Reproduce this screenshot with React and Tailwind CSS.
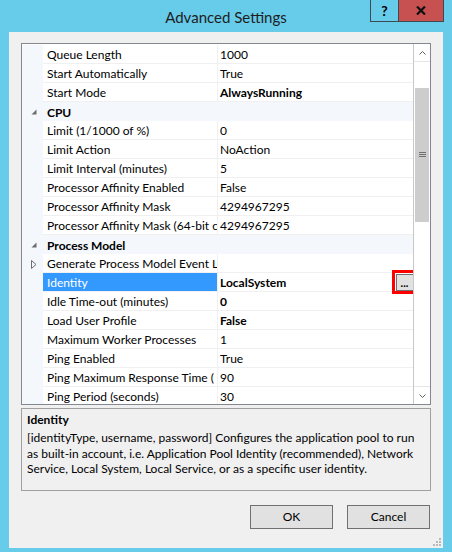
import React from 'react';

const rows = [
  { name: 'Queue Length', value: '1000' },
  { name: 'Start Automatically', value: 'True' },
  { name: 'Start Mode', value: 'AlwaysRunning', bold: true },
  { name: 'CPU', category: true },
  { name: 'Limit (1/1000 of %)', value: '0' },
  { name: 'Limit Action', value: 'NoAction' },
  { name: 'Limit Interval (minutes)', value: '5' },
  { name: 'Processor Affinity Enabled', value: 'False' },
  { name: 'Processor Affinity Mask', value: '4294967295' },
  { name: 'Processor Affinity Mask (64-bit c', value: '4294967295' },
  { name: 'Process Model', category: true },
  { name: 'Generate Process Model Event L', value: '', collapsed: true },
  { name: 'Identity', value: 'LocalSystem', bold: true, selected: true },
  { name: 'Idle Time-out (minutes)', value: '0', bold: true },
  { name: 'Load User Profile', value: 'False', bold: true },
  { name: 'Maximum Worker Processes', value: '1' },
  { name: 'Ping Enabled', value: 'True' },
  { name: 'Ping Maximum Response Time (', value: '90' },
  { name: 'Ping Period (seconds)', value: '30' },
];

function Expanded() {
  return (
    <svg width="6" height="6" viewBox="0 0 6 6">
      <polygon points="5.5,0.5 5.5,5.5 0.5,5.5" fill="#6d6d6d" />
    </svg>
  );
}

function Collapsed() {
  return (
    <svg width="6" height="9" viewBox="0 0 6 9">
      <polygon points="0.5,0.5 5,4.5 0.5,8.5" fill="none" stroke="#6d6d6d" strokeWidth="1" />
    </svg>
  );
}

function Row({ row }) {
  if (row.category) {
    return (
      <div className="flex h-[19px] bg-[#f4f7fc] shrink-0">
        <div className="w-[21px] flex items-center justify-center pl-[2px] pt-[1px]">
          <Expanded />
        </div>
        <div className="pl-[4px] pt-[2px] flex items-center font-bold text-black">{row.name}</div>
      </div>
    );
  }
  return (
    <div className="flex h-[19px] shrink-0">
      <div className="w-[21px] bg-[#f4f7fc] flex items-center justify-center pl-[2px] pt-[1px]">
        {row.collapsed && <Collapsed />}
      </div>
      <div className="flex-1 flex border-b border-[#f0f0f0] min-w-0">
        <div
          className={`w-[175px] shrink-0 pl-[4px] pt-[2px] flex items-center border-r border-[#f0f0f0] overflow-hidden whitespace-nowrap ${
            row.selected ? 'bg-[#3399ff] text-white' : 'text-black'
          }`}
        >
          {row.name}
        </div>
        <div className={`flex-1 pl-[2px] pt-[2px] flex items-center relative whitespace-nowrap ${row.bold ? 'font-bold' : ''}`}>
          {row.value}
          {row.selected && (
            <div className="absolute right-[-4px] top-[-3px] w-[25px] h-[24px] border-[3px] border-[#ff0000] flex items-center justify-center">
              <div className="w-[18px] h-[17px] border border-[#707070] bg-[#e1e1e1] flex items-end justify-center pb-[3px]">
                <span className="text-[11px] leading-[8px] font-bold">...</span>
              </div>
            </div>
          )}
        </div>
      </div>
    </div>
  );
}

function Scrollbar() {
  return (
    <div className="w-[17px] shrink-0 bg-white border-l border-[#c8c8c8] flex flex-col">
      <div className="h-[18px] border-b border-[#e6e6e6] flex items-center justify-center">
        <svg width="7" height="4" viewBox="0 0 7 4">
          <polyline points="0.5,3.5 3.5,0.5 6.5,3.5" fill="none" stroke="#606060" strokeWidth="1" />
        </svg>
      </div>
      <div className="h-[26px]" />
      <div className="h-[134px] mx-[1px] bg-[#cdcdcd] flex items-center justify-center">
        <svg width="7" height="6" viewBox="0 0 7 6">
          <line x1="0" y1="0.5" x2="7" y2="0.5" stroke="#707070" />
          <line x1="0" y1="2.5" x2="7" y2="2.5" stroke="#707070" />
          <line x1="0" y1="4.5" x2="7" y2="4.5" stroke="#707070" />
        </svg>
      </div>
      <div className="flex-1" />
      <div className="h-[18px] border-t border-[#e6e6e6] flex items-center justify-center">
        <svg width="7" height="4" viewBox="0 0 7 4">
          <polyline points="0.5,0.5 3.5,3.5 6.5,0.5" fill="none" stroke="#606060" strokeWidth="1" />
        </svg>
      </div>
    </div>
  );
}

export default function App() {
  return (
    <div
      className="w-[452px] h-[552px] bg-[#67cbea] flex flex-col text-[12px] text-black"
      style={{ fontFamily: 'Lato, "Noto Sans", sans-serif' }}
    >
      {/* Title bar */}
      <div className="h-[32px] shrink-0 relative flex items-center justify-center">
        <span className="text-[15px] text-[#1e1e1e] pt-[2px]">Advanced Settings</span>
        <div className="absolute top-0 right-[8px] flex h-[22px]">
          <div className="w-[28px] border border-t-0 border-[#3c4a52] border-r-0 flex items-center justify-center font-bold text-[14px]">
            ?
          </div>
          <div className="w-[46px] bg-[#c75050] border border-t-0 border-[#3c4a52] flex items-center justify-center">
            <svg width="10" height="9" viewBox="0 0 10 9">
              <path d="M1 0.5 L9 8.5 M9 0.5 L1 8.5" stroke="#111" strokeWidth="2.2" />
            </svg>
          </div>
        </div>
      </div>

      {/* Client area */}
      <div className="mx-[9px] mb-[4px] flex-1 bg-[#f0f0f0] flex flex-col px-[12px] pt-[11px] relative">
        {/* Property grid */}
        <div className="h-[362px] shrink-0 bg-white border border-[#828790] flex overflow-hidden">
          <div className="flex-1 flex flex-col overflow-hidden min-w-0 pt-[1px]">
            {rows.map((r) => (
              <Row key={r.name} row={r} />
            ))}
          </div>
          <Scrollbar />
        </div>

        {/* Description */}
        <div className="mt-[3px] h-[83px] shrink-0 border border-[#a0a0a0] px-[5px] pt-[2px]">
          <div className="font-bold leading-[17px]">Identity</div>
          <div className="leading-[15.5px] mt-[2px] whitespace-nowrap">
            <div>[identityType, username, password] Configures the application pool to run</div>
            <div>as built-in account, i.e. Application Pool Identity (recommended), Network</div>
            <div>Service, Local System, Local Service, or as a specific user identity.</div>
          </div>
        </div>

        {/* Buttons */}
        <div className="mt-[14px] flex justify-end gap-[14px] pr-[1px]">
          <button className="w-[83px] h-[24px] bg-[#e1e1e1] border border-[#707070] text-[12px]">OK</button>
          <button className="w-[83px] h-[24px] bg-[#e1e1e1] border border-[#707070] text-[12px]">Cancel</button>
        </div>

        {/* Resize grip */}
        <svg className="absolute right-[2px] bottom-[2px]" width="8" height="8" viewBox="0 0 8 8">
          <rect x="6" y="0" width="2" height="2" fill="#b8b8b8" />
          <rect x="3" y="3" width="2" height="2" fill="#b8b8b8" />
          <rect x="6" y="3" width="2" height="2" fill="#b8b8b8" />
          <rect x="0" y="6" width="2" height="2" fill="#b8b8b8" />
          <rect x="3" y="6" width="2" height="2" fill="#b8b8b8" />
          <rect x="6" y="6" width="2" height="2" fill="#b8b8b8" />
        </svg>
      </div>
    </div>
  );
}
